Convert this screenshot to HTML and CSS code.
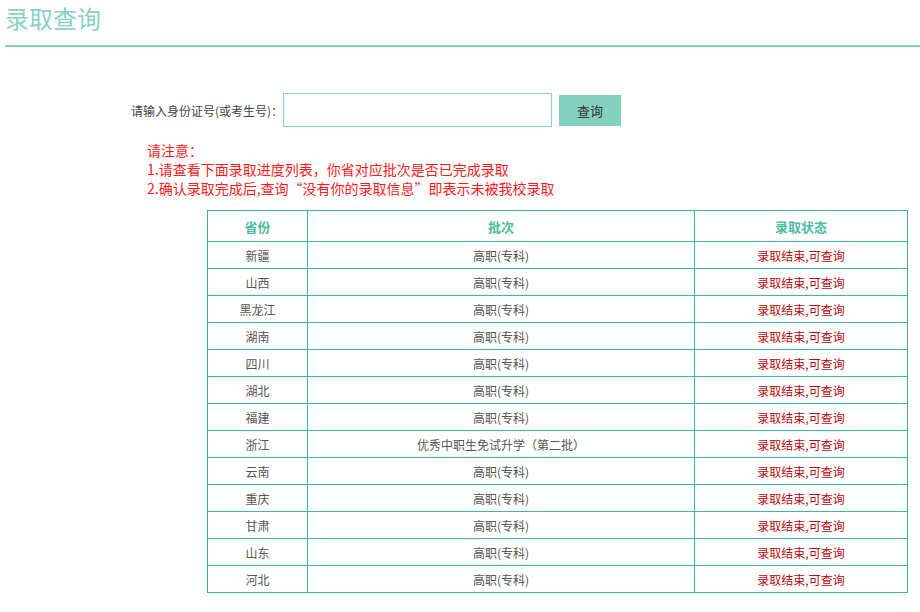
FILE: index.html
```html
<!DOCTYPE html>
<html lang="zh-CN">
<head>
<meta charset="utf-8">
<title>录取查询</title>
<link rel="stylesheet" href="styles.css">
</head>
<body>
<div class="page">
  <h1 class="title">录取查询</h1>
  <div class="search">
    <label class="search-label">请输入身份证号(或考生号)：</label>
    <input class="search-input" type="text">
    <button class="search-btn">查询</button>
  </div>
  <div class="notes">
    <p>请注意：</p>
    <p>1.请查看下面录取进度列表，你省对应批次是否已完成录取</p>
    <p>2.确认录取完成后,查询“没有你的录取信息”即表示未被我校录取</p>
  </div>
  <table class="result">
    <thead>
      <tr><th class="c1">省份</th><th class="c2">批次</th><th class="c3">录取状态</th></tr>
    </thead>
    <tbody>
      <tr><td>新疆</td><td>高职(专科)</td><td class="status">录取结束,可查询</td></tr>
      <tr><td>山西</td><td>高职(专科)</td><td class="status">录取结束,可查询</td></tr>
      <tr><td>黑龙江</td><td>高职(专科)</td><td class="status">录取结束,可查询</td></tr>
      <tr><td>湖南</td><td>高职(专科)</td><td class="status">录取结束,可查询</td></tr>
      <tr><td>四川</td><td>高职(专科)</td><td class="status">录取结束,可查询</td></tr>
      <tr><td>湖北</td><td>高职(专科)</td><td class="status">录取结束,可查询</td></tr>
      <tr><td>福建</td><td>高职(专科)</td><td class="status">录取结束,可查询</td></tr>
      <tr><td>浙江</td><td>优秀中职生免试升学（第二批）</td><td class="status">录取结束,可查询</td></tr>
      <tr><td>云南</td><td>高职(专科)</td><td class="status">录取结束,可查询</td></tr>
      <tr><td>重庆</td><td>高职(专科)</td><td class="status">录取结束,可查询</td></tr>
      <tr><td>甘肃</td><td>高职(专科)</td><td class="status">录取结束,可查询</td></tr>
      <tr><td>山东</td><td>高职(专科)</td><td class="status">录取结束,可查询</td></tr>
      <tr><td>河北</td><td>高职(专科)</td><td class="status">录取结束,可查询</td></tr>
    </tbody>
  </table>
</div>
</body>
</html>
```
FILE: styles.css
```css
* { box-sizing: border-box; }
html, body { margin: 0; padding: 0; background: #fff; }
body {
  font-family: "Noto Sans CJK SC", "Noto Sans", "Liberation Sans", sans-serif;
  color: #333;
}
.page { padding-left: 5px; }
.title {
  margin: 0;
  font-size: 24px;
  font-weight: normal;
  line-height: 36px;
  height: 47px;
  color: #86d3c0;
  border-bottom: 2px solid #82d1bc;
  padding-top: 0;
}
.search {
  display: flex;
  align-items: center;
  padding-left: 126px;
  margin-top: 46px;
}
.search-label {
  font-size: 12px;
  color: #444;
}
.search-input {
  width: 269px;
  height: 34px;
  border: 1px solid #88d3c1;
  outline: none;
  margin: 0;
  padding: 0 6px;
}
.search-btn {
  width: 62px;
  height: 31px;
  margin: 0 0 0 7px;
  padding: 0;
  border: none;
  background: #85d1bf;
  color: #333;
  font-family: inherit;
  font-size: 13px;
}
.notes {
  margin-top: 14px;
  padding-left: 142px;
  color: #ff1a1a;
  font-size: 14px;
  line-height: 19px;
}
.notes p { margin: 0; }
.result {
  margin: 12px 0 0 202px;
  width: 701px;
  border-collapse: collapse;
  font-size: 12px;
}
.result th, .result td {
  border: 1px solid #3db897;
  text-align: center;
  padding: 0;
}
.result th {
  height: 31px;
  font-size: 13px;
  font-weight: bold;
  color: #4dbd9d;
}
.result td {
  height: 27px;
  color: #555;
}
.result td.status { color: #b80a0a; }
.c1 { width: 100px; }
.c2 { width: 387px; }
.c3 { width: 213px; }
```
